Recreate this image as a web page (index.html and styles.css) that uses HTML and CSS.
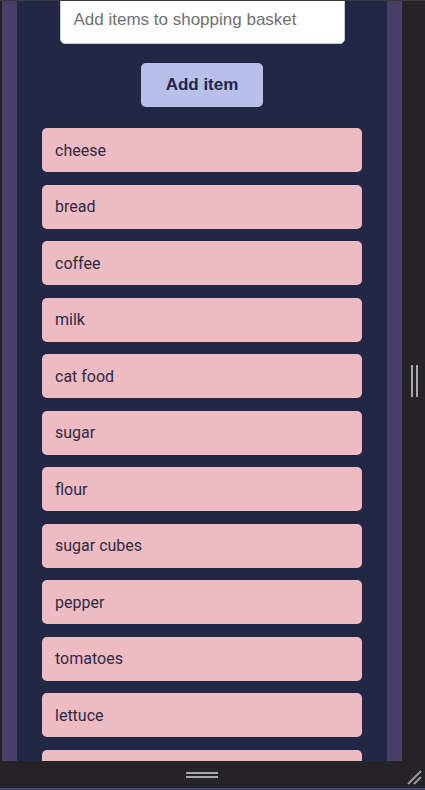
FILE: index.html
```html
<!DOCTYPE html>
<html>
<head>
<meta charset="utf-8">
<link rel="stylesheet" href="styles.css">
</head>
<body>
<div class="frame">
  <div class="topline"></div>
  <div class="middle">
    <div class="viewport">
      <div class="panel">
        <div class="content">
          <input class="entry" type="text" placeholder="Add items to shopping basket">
          <button class="add">Add item</button>
          <ul class="list">
            <li class="item">cheese</li>
            <li class="item">bread</li>
            <li class="item">coffee</li>
            <li class="item">milk</li>
            <li class="item">cat food</li>
            <li class="item">sugar</li>
            <li class="item">flour</li>
            <li class="item">sugar cubes</li>
            <li class="item">pepper</li>
            <li class="item">tomatoes</li>
            <li class="item">lettuce</li>
            <li class="item"></li>
          </ul>
        </div>
      </div>
    </div>
    <div class="side">
      <span class="vgrip"></span>
    </div>
  </div>
  <div class="bottom">
    <span class="hgrip"></span>
    <svg class="corner" width="16" height="16" viewBox="0 0 16 16">
      <line x1="2" y1="15" x2="15" y2="2" stroke="#9a999e" stroke-width="2"/>
      <line x1="8" y1="15" x2="15" y2="8" stroke="#9a999e" stroke-width="2"/>
    </svg>
  </div>
  <div class="bottomline"></div>
</div>
</body>
</html>
```
FILE: styles.css
```css
html, body {
  margin: 0;
  padding: 0;
  background: #252327;
  overflow: hidden;
}
.frame {
  width: 425px;
  height: 790px;
  display: flex;
  flex-direction: column;
}
.topline {
  height: 1px;
  background: #3a393e;
  flex: none;
}
.middle {
  flex: 1;
  display: flex;
  min-height: 0;
}
.viewport {
  width: 400px;
  margin-left: 2px;
  background: #483f69;
  padding: 0 15px;
  box-sizing: border-box;
  flex: none;
  overflow: hidden;
}
.panel {
  background: #232746;
  height: 100%;
  overflow: hidden;
}
.content {
  margin-top: -5px;
  display: flex;
  flex-direction: column;
  align-items: center;
}
.entry {
  width: 285px;
  height: 48px;
  box-sizing: border-box;
  border: 1px solid #c9c9cf;
  border-radius: 5px;
  background: #ffffff;
  padding: 0 13px;
  font-family: "Liberation Sans", Arial, sans-serif;
  font-size: 17px;
  color: #333;
  outline: none;
  margin: 0;
}
.entry::placeholder {
  color: #707070;
}
.add {
  margin-top: 19px;
  width: 122px;
  height: 44px;
  border: none;
  border-radius: 5px;
  background: #b8c0ea;
  color: #232746;
  font-family: "Liberation Sans", Arial, sans-serif;
  font-weight: bold;
  font-size: 17px;
  padding: 0;
}
.list {
  list-style: none;
  margin: 21px 0 0;
  padding: 0;
  width: 320px;
  display: flex;
  flex-direction: column;
  gap: 12.55px;
}
.item {
  height: 44px;
  flex: none;
  box-sizing: border-box;
  background: #eebbc3;
  border-radius: 5px;
  padding: 0 13px;
  display: flex;
  align-items: center;
  font-family: Roboto, "Noto Sans", sans-serif;
  font-size: 16px;
  color: #2e2a44;
}
.side {
  flex: 1;
  display: flex;
  align-items: center;
  justify-content: center;
  padding-left: 2px;
}
.vgrip {
  width: 3px;
  height: 32px;
  border-left: 2px solid #a7a6ab;
  border-right: 2px solid #a7a6ab;
}
.bottom {
  height: 27px;
  flex: none;
  position: relative;
  display: flex;
  align-items: center;
  justify-content: center;
}
.hgrip {
  width: 32px;
  height: 2px;
  border-top: 2px solid #a7a6ab;
  border-bottom: 2px solid #a7a6ab;
  margin-left: -21px;
}
.corner {
  position: absolute;
  right: 3px;
  bottom: 3px;
}
.bottomline {
  height: 2px;
  flex: none;
  background: #44487a;
}
```
